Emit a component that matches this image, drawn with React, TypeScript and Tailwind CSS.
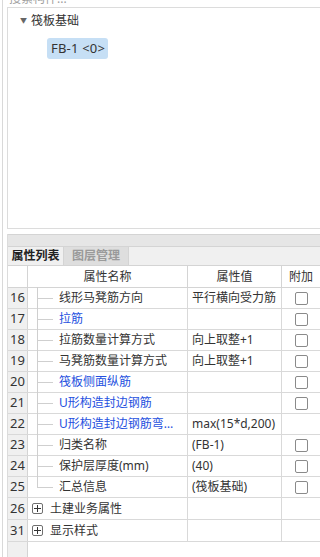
import React from "react";

interface PropRow {
    no: number;
    name: string;
    value?: string;
    blue?: boolean;
    check?: boolean;
    last?: boolean;
    group?: boolean;
}

const ROWS: PropRow[] = [
    { no: 16, name: "线形马凳筋方向", value: "平行横向受力筋", check: true },
    { no: 17, name: "拉筋", blue: true, check: true },
    { no: 18, name: "拉筋数量计算方式", value: "向上取整+1", check: true },
    { no: 19, name: "马凳筋数量计算方式", value: "向上取整+1", check: true },
    { no: 20, name: "筏板侧面纵筋", blue: true, check: true },
    { no: 21, name: "U形构造封边钢筋", blue: true, check: true },
    { no: 22, name: "U形构造封边钢筋弯折长度", value: "max(15*d,200)", blue: true },
    { no: 23, name: "归类名称", value: "(FB-1)", check: true },
    { no: 24, name: "保护层厚度(mm)", value: "(40)", check: true },
    { no: 25, name: "汇总信息", value: "(筏板基础)", check: true, last: true },
    { no: 26, name: "土建业务属性", group: true },
    { no: 31, name: "显示样式", group: true },
];

function Checkbox() {
    return <div className="w-[13px] h-[13px] rounded-[2px] border border-[#8a8a8a] bg-white" />;
}

function PlusBox() {
    return (
        <div className="w-[11px] h-[11px] rounded-[2px] border border-[#707070] flex items-center justify-center">
            <svg width="7" height="7" viewBox="0 0 7 7">
                <path d="M0 3.5h7M3.5 0v7" stroke="#333" strokeWidth="1" />
            </svg>
        </div>
    );
}

export default function App() {
    return (
        <div
            className="w-[320px] h-[557px] overflow-hidden bg-white flex text-[#333]"
            style={{ fontFamily: '"Noto Sans", "Noto Sans CJK SC", sans-serif' }}
        >
            {/* outer frame line */}
            <div className="w-[2px] shrink-0" />
            <div className="w-px shrink-0 bg-[#d9d9d9]" />
            <div className="w-[4px] shrink-0" />

            <div className="flex-1 flex flex-col min-w-0">
                {/* search box, scrolled off the top */}
                <div className="h-[8px] overflow-hidden border-b border-[#dcdcdc] pl-[2px]">
                    <div className="mt-[-9px] text-[12px] leading-[16px] text-[#a0a0a0]">搜索构件...</div>
                </div>

                {/* tree */}
                <div className="h-[221px] border-l border-b border-[#dcdcdc] pt-[5px]">
                    <div className="flex items-center h-[16px] pl-[12px] text-[12px]">
                        <span className="text-[7px] text-[#666] mr-[4px]">▼</span>
                        <span>筏板基础</span>
                    </div>
                    <div className="pl-[39px] mt-[6px]">
                        <div className="inline-flex items-center h-[21px] w-[61px] pl-[4px] rounded-[3px] bg-[#c6dff5] text-[13px] tracking-[0.2px]">
                            FB-1 &lt;0&gt;
                        </div>
                    </div>
                </div>

                <div className="h-[5px]" />

                {/* tabs */}
                <div className="border-l border-[#dcdcdc]">
                    <div className="h-[12px] bg-[#e6e6e6] border-t border-[#d4d4d4]" />
                    <div className="h-[19px] bg-[#f0f0f0] border-t border-[#d4d4d4] flex text-[12px]">
                        <div className="w-[56px] flex items-center justify-center font-semibold text-[#222] border-r border-[#d4d4d4]">
                            属性列表
                        </div>
                        <div className="w-[65px] flex items-center justify-center bg-[#dedede] text-[#9a9a9a] font-semibold border-r border-[#d4d4d4]">
                            图层管理
                        </div>
                    </div>
                </div>

                {/* property table */}
                <div className="flex-1 border-l border-[#dcdcdc] relative text-[12px]">
                    <div className="absolute left-0 top-0 bottom-0 w-[20px] bg-[#f0f0f0] border-r border-[#d4d4d4]" />
                    <div className="relative">
                        <div className="grid grid-cols-[20px_160px_94px_38px] h-[23px] border-b border-t border-[#d4d4d4]">
                            <div className="bg-white border-r border-[#d4d4d4]" />
                            <div className="flex items-center justify-center border-r border-[#d4d4d4]">属性名称</div>
                            <div className="flex items-center justify-center border-r border-[#d4d4d4]">属性值</div>
                            <div className="flex items-center justify-center">附加</div>
                        </div>
                        {ROWS.map((row) => (
                            <div
                                key={row.no}
                                className={
                                    row.group
                                        ? "grid grid-cols-[20px_160px_94px_38px] h-[22px] border-b border-[#d9d9d9]"
                                        : "grid grid-cols-[20px_160px_94px_38px] h-[21px] border-b border-[#d9d9d9]"
                                }
                            >
                                <div className="flex items-center justify-center text-[13px] text-[#333] border-r border-[#d4d4d4]">
                                    {row.no}
                                </div>
                                {row.group ? (
                                    <div className="flex items-center pl-[4px] gap-[7px] border-r border-[#d9d9d9]">
                                        <PlusBox />
                                        <span>{row.name}</span>
                                    </div>
                                ) : (
                                    <div className="relative flex items-center pl-[31px] pr-[2px] border-r border-[#d9d9d9] min-w-0">
                                        <div
                                            className={
                                                row.last
                                                    ? "absolute left-[9px] top-[-1px] h-[11px] w-px bg-[#cfcfcf]"
                                                    : "absolute left-[9px] top-[-1px] bottom-[-1px] w-px bg-[#cfcfcf]"
                                            }
                                        />
                                        <div className="absolute left-[9px] top-[10px] w-[16px] h-px bg-[#cfcfcf]" />
                                        <span
                                            className={
                                                row.blue
                                                    ? "text-[#2450e0] whitespace-nowrap overflow-hidden text-ellipsis"
                                                    : "whitespace-nowrap overflow-hidden"
                                            }
                                        >
                                            {row.name}
                                        </span>
                                    </div>
                                )}
                                <div className="flex items-center pl-[4px] border-r border-[#d9d9d9] whitespace-nowrap overflow-hidden">
                                    {row.value}
                                </div>
                                <div className="flex items-center pl-[13px]">{row.check && <Checkbox />}</div>
                            </div>
                        ))}
                    </div>
                </div>
            </div>
        </div>
    );
}
